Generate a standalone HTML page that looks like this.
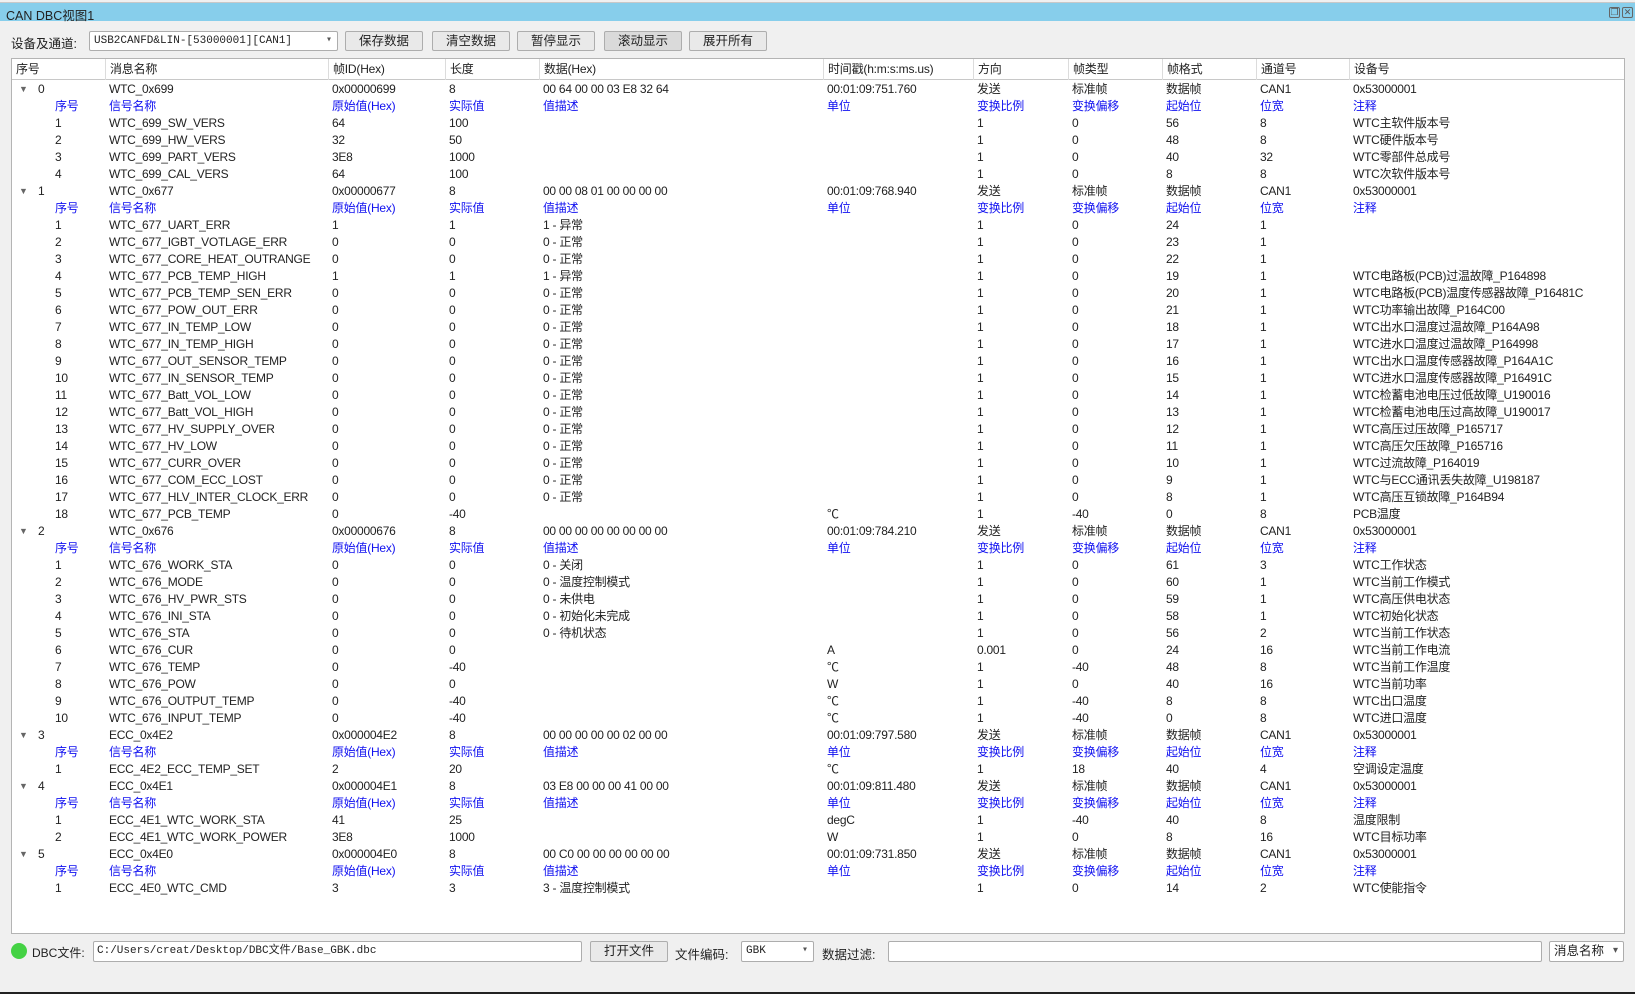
<!DOCTYPE html>
<html><head><meta charset="utf-8"><style>
*{margin:0;padding:0;box-sizing:border-box}
body{width:1635px;height:994px;background:#f0f0f0;position:relative;overflow:hidden;font-family:"Liberation Sans","Noto Sans CJK SC",sans-serif;font-size:12.5px;color:#222}
.tb{position:absolute;left:0;top:2px;width:1635px;height:19px;background:#87ceeb;border-top:1px solid #c8c8c8}
.tb span{position:absolute;left:6px;top:2px;font-size:12.5px}
.ic{position:absolute;top:4px;width:11px;height:11px;border:1px solid #666;border-radius:2px;font-size:9px;line-height:9px;text-align:center;color:#555}
.lbl{position:absolute;font-size:12.5px}
.btn{position:absolute;top:31px;height:20px;border:1px solid #adadad;background:#e9e9e9;border-radius:2px;text-align:center;line-height:18px;font-size:12.5px}
.cmb{position:absolute;border:1px solid #adadad;background:#fff;border-radius:2px;font-family:"Liberation Mono","Noto Sans CJK SC",monospace;font-size:11px;line-height:18px;padding-left:4px}
.cmb:after{content:"▾";position:absolute;right:5px;top:0;font-size:10px;color:#555}
.tbl{position:absolute;left:11px;top:58px;width:1614px;height:876px;background:#fff;border:1px solid #b4b4b4}
.hd{position:absolute;left:0;top:0;width:1612px;height:21px;border-bottom:1px solid #c8c8c8;background:#fff}
.hd i{position:absolute;top:0;height:21px;line-height:21px;font-style:normal;padding-left:4px;border-left:1px solid #dcdcdc;font-size:12px;letter-spacing:-0.2px}
.r{position:absolute;left:0;width:1612px;height:17px;line-height:17px;margin-top:1px;font-size:12px;letter-spacing:-0.25px}
.r i{position:absolute;font-style:normal;white-space:nowrap}
.s{color:#1010f0}
.t{position:absolute;left:7px;font-size:9px;color:#666}
.a{left:26px}.a2{left:43px}.b{left:97px}.c{left:320px}.d{left:437px}.e{left:531px}.f{left:815px}.g{left:965px}.h{left:1060px}.j{left:1154px}.k{left:1248px}.l{left:1341px}
.inp{position:absolute;top:941px;height:21px;background:#fff;border:1px solid #adadad;border-radius:2px}
</style></head><body>
<div class="tb"><span>CAN DBC视图1</span><div class="ic" style="left:1609px">❐</div><div class="ic" style="left:1622px">✕</div></div>
<div class="lbl" style="left:11px;top:33px">设备及通道:</div>
<div class="cmb" style="left:89px;top:31px;width:249px;height:20px">USB2CANFD&amp;LIN-[53000001][CAN1]</div>
<div class="btn" style="left:345px;width:78px">保存数据</div>
<div class="btn" style="left:432px;width:78px">清空数据</div>
<div class="btn" style="left:517px;width:78px">暂停显示</div>
<div class="btn" style="left:604px;width:78px;background:#dadada">滚动显示</div>
<div class="btn" style="left:689px;width:78px">展开所有</div>
<div class="tbl">
<div class="hd"><i style="left:0;border:0">序号</i><i style="left:93px">消息名称</i><i style="left:316px">帧ID(Hex)</i><i style="left:433px">长度</i><i style="left:527px">数据(Hex)</i><i style="left:811px">时间戳(h:m:s:ms.us)</i><i style="left:961px">方向</i><i style="left:1056px">帧类型</i><i style="left:1150px">帧格式</i><i style="left:1244px">通道号</i><i style="left:1337px">设备号</i></div>
<div class="r" style="top:21px"><b class="t">▼</b><i class="a">0</i><i class="b">WTC_0x699</i><i class="c">0x00000699</i><i class="d">8</i><i class="e">00 64 00 00 03 E8 32 64</i><i class="f">00:01:09:751.760</i><i class="g">发送</i><i class="h">标准帧</i><i class="j">数据帧</i><i class="k">CAN1</i><i class="l">0x53000001</i></div>
<div class="r s" style="top:38px"><i class="a2">序号</i><i class="b">信号名称</i><i class="c">原始值(Hex)</i><i class="d">实际值</i><i class="e">值描述</i><i class="f">单位</i><i class="g">变换比例</i><i class="h">变换偏移</i><i class="j">起始位</i><i class="k">位宽</i><i class="l">注释</i></div>
<div class="r" style="top:55px"><i class="a2">1</i><i class="b">WTC_699_SW_VERS</i><i class="c">64</i><i class="d">100</i><i class="g">1</i><i class="h">0</i><i class="j">56</i><i class="k">8</i><i class="l">WTC主软件版本号</i></div>
<div class="r" style="top:72px"><i class="a2">2</i><i class="b">WTC_699_HW_VERS</i><i class="c">32</i><i class="d">50</i><i class="g">1</i><i class="h">0</i><i class="j">48</i><i class="k">8</i><i class="l">WTC硬件版本号</i></div>
<div class="r" style="top:89px"><i class="a2">3</i><i class="b">WTC_699_PART_VERS</i><i class="c">3E8</i><i class="d">1000</i><i class="g">1</i><i class="h">0</i><i class="j">40</i><i class="k">32</i><i class="l">WTC零部件总成号</i></div>
<div class="r" style="top:106px"><i class="a2">4</i><i class="b">WTC_699_CAL_VERS</i><i class="c">64</i><i class="d">100</i><i class="g">1</i><i class="h">0</i><i class="j">8</i><i class="k">8</i><i class="l">WTC次软件版本号</i></div>
<div class="r" style="top:123px"><b class="t">▼</b><i class="a">1</i><i class="b">WTC_0x677</i><i class="c">0x00000677</i><i class="d">8</i><i class="e">00 00 08 01 00 00 00 00</i><i class="f">00:01:09:768.940</i><i class="g">发送</i><i class="h">标准帧</i><i class="j">数据帧</i><i class="k">CAN1</i><i class="l">0x53000001</i></div>
<div class="r s" style="top:140px"><i class="a2">序号</i><i class="b">信号名称</i><i class="c">原始值(Hex)</i><i class="d">实际值</i><i class="e">值描述</i><i class="f">单位</i><i class="g">变换比例</i><i class="h">变换偏移</i><i class="j">起始位</i><i class="k">位宽</i><i class="l">注释</i></div>
<div class="r" style="top:157px"><i class="a2">1</i><i class="b">WTC_677_UART_ERR</i><i class="c">1</i><i class="d">1</i><i class="e">1 - 异常</i><i class="g">1</i><i class="h">0</i><i class="j">24</i><i class="k">1</i></div>
<div class="r" style="top:174px"><i class="a2">2</i><i class="b">WTC_677_IGBT_VOTLAGE_ERR</i><i class="c">0</i><i class="d">0</i><i class="e">0 - 正常</i><i class="g">1</i><i class="h">0</i><i class="j">23</i><i class="k">1</i></div>
<div class="r" style="top:191px"><i class="a2">3</i><i class="b">WTC_677_CORE_HEAT_OUTRANGE</i><i class="c">0</i><i class="d">0</i><i class="e">0 - 正常</i><i class="g">1</i><i class="h">0</i><i class="j">22</i><i class="k">1</i></div>
<div class="r" style="top:208px"><i class="a2">4</i><i class="b">WTC_677_PCB_TEMP_HIGH</i><i class="c">1</i><i class="d">1</i><i class="e">1 - 异常</i><i class="g">1</i><i class="h">0</i><i class="j">19</i><i class="k">1</i><i class="l">WTC电路板(PCB)过温故障_P164898</i></div>
<div class="r" style="top:225px"><i class="a2">5</i><i class="b">WTC_677_PCB_TEMP_SEN_ERR</i><i class="c">0</i><i class="d">0</i><i class="e">0 - 正常</i><i class="g">1</i><i class="h">0</i><i class="j">20</i><i class="k">1</i><i class="l">WTC电路板(PCB)温度传感器故障_P16481C</i></div>
<div class="r" style="top:242px"><i class="a2">6</i><i class="b">WTC_677_POW_OUT_ERR</i><i class="c">0</i><i class="d">0</i><i class="e">0 - 正常</i><i class="g">1</i><i class="h">0</i><i class="j">21</i><i class="k">1</i><i class="l">WTC功率输出故障_P164C00</i></div>
<div class="r" style="top:259px"><i class="a2">7</i><i class="b">WTC_677_IN_TEMP_LOW</i><i class="c">0</i><i class="d">0</i><i class="e">0 - 正常</i><i class="g">1</i><i class="h">0</i><i class="j">18</i><i class="k">1</i><i class="l">WTC出水口温度过温故障_P164A98</i></div>
<div class="r" style="top:276px"><i class="a2">8</i><i class="b">WTC_677_IN_TEMP_HIGH</i><i class="c">0</i><i class="d">0</i><i class="e">0 - 正常</i><i class="g">1</i><i class="h">0</i><i class="j">17</i><i class="k">1</i><i class="l">WTC进水口温度过温故障_P164998</i></div>
<div class="r" style="top:293px"><i class="a2">9</i><i class="b">WTC_677_OUT_SENSOR_TEMP</i><i class="c">0</i><i class="d">0</i><i class="e">0 - 正常</i><i class="g">1</i><i class="h">0</i><i class="j">16</i><i class="k">1</i><i class="l">WTC出水口温度传感器故障_P164A1C</i></div>
<div class="r" style="top:310px"><i class="a2">10</i><i class="b">WTC_677_IN_SENSOR_TEMP</i><i class="c">0</i><i class="d">0</i><i class="e">0 - 正常</i><i class="g">1</i><i class="h">0</i><i class="j">15</i><i class="k">1</i><i class="l">WTC进水口温度传感器故障_P16491C</i></div>
<div class="r" style="top:327px"><i class="a2">11</i><i class="b">WTC_677_Batt_VOL_LOW</i><i class="c">0</i><i class="d">0</i><i class="e">0 - 正常</i><i class="g">1</i><i class="h">0</i><i class="j">14</i><i class="k">1</i><i class="l">WTC检蓄电池电压过低故障_U190016</i></div>
<div class="r" style="top:344px"><i class="a2">12</i><i class="b">WTC_677_Batt_VOL_HIGH</i><i class="c">0</i><i class="d">0</i><i class="e">0 - 正常</i><i class="g">1</i><i class="h">0</i><i class="j">13</i><i class="k">1</i><i class="l">WTC检蓄电池电压过高故障_U190017</i></div>
<div class="r" style="top:361px"><i class="a2">13</i><i class="b">WTC_677_HV_SUPPLY_OVER</i><i class="c">0</i><i class="d">0</i><i class="e">0 - 正常</i><i class="g">1</i><i class="h">0</i><i class="j">12</i><i class="k">1</i><i class="l">WTC高压过压故障_P165717</i></div>
<div class="r" style="top:378px"><i class="a2">14</i><i class="b">WTC_677_HV_LOW</i><i class="c">0</i><i class="d">0</i><i class="e">0 - 正常</i><i class="g">1</i><i class="h">0</i><i class="j">11</i><i class="k">1</i><i class="l">WTC高压欠压故障_P165716</i></div>
<div class="r" style="top:395px"><i class="a2">15</i><i class="b">WTC_677_CURR_OVER</i><i class="c">0</i><i class="d">0</i><i class="e">0 - 正常</i><i class="g">1</i><i class="h">0</i><i class="j">10</i><i class="k">1</i><i class="l">WTC过流故障_P164019</i></div>
<div class="r" style="top:412px"><i class="a2">16</i><i class="b">WTC_677_COM_ECC_LOST</i><i class="c">0</i><i class="d">0</i><i class="e">0 - 正常</i><i class="g">1</i><i class="h">0</i><i class="j">9</i><i class="k">1</i><i class="l">WTC与ECC通讯丢失故障_U198187</i></div>
<div class="r" style="top:429px"><i class="a2">17</i><i class="b">WTC_677_HLV_INTER_CLOCK_ERR</i><i class="c">0</i><i class="d">0</i><i class="e">0 - 正常</i><i class="g">1</i><i class="h">0</i><i class="j">8</i><i class="k">1</i><i class="l">WTC高压互锁故障_P164B94</i></div>
<div class="r" style="top:446px"><i class="a2">18</i><i class="b">WTC_677_PCB_TEMP</i><i class="c">0</i><i class="d">-40</i><i class="f">℃</i><i class="g">1</i><i class="h">-40</i><i class="j">0</i><i class="k">8</i><i class="l">PCB温度</i></div>
<div class="r" style="top:463px"><b class="t">▼</b><i class="a">2</i><i class="b">WTC_0x676</i><i class="c">0x00000676</i><i class="d">8</i><i class="e">00 00 00 00 00 00 00 00</i><i class="f">00:01:09:784.210</i><i class="g">发送</i><i class="h">标准帧</i><i class="j">数据帧</i><i class="k">CAN1</i><i class="l">0x53000001</i></div>
<div class="r s" style="top:480px"><i class="a2">序号</i><i class="b">信号名称</i><i class="c">原始值(Hex)</i><i class="d">实际值</i><i class="e">值描述</i><i class="f">单位</i><i class="g">变换比例</i><i class="h">变换偏移</i><i class="j">起始位</i><i class="k">位宽</i><i class="l">注释</i></div>
<div class="r" style="top:497px"><i class="a2">1</i><i class="b">WTC_676_WORK_STA</i><i class="c">0</i><i class="d">0</i><i class="e">0 - 关闭</i><i class="g">1</i><i class="h">0</i><i class="j">61</i><i class="k">3</i><i class="l">WTC工作状态</i></div>
<div class="r" style="top:514px"><i class="a2">2</i><i class="b">WTC_676_MODE</i><i class="c">0</i><i class="d">0</i><i class="e">0 - 温度控制模式</i><i class="g">1</i><i class="h">0</i><i class="j">60</i><i class="k">1</i><i class="l">WTC当前工作模式</i></div>
<div class="r" style="top:531px"><i class="a2">3</i><i class="b">WTC_676_HV_PWR_STS</i><i class="c">0</i><i class="d">0</i><i class="e">0 - 未供电</i><i class="g">1</i><i class="h">0</i><i class="j">59</i><i class="k">1</i><i class="l">WTC高压供电状态</i></div>
<div class="r" style="top:548px"><i class="a2">4</i><i class="b">WTC_676_INI_STA</i><i class="c">0</i><i class="d">0</i><i class="e">0 - 初始化未完成</i><i class="g">1</i><i class="h">0</i><i class="j">58</i><i class="k">1</i><i class="l">WTC初始化状态</i></div>
<div class="r" style="top:565px"><i class="a2">5</i><i class="b">WTC_676_STA</i><i class="c">0</i><i class="d">0</i><i class="e">0 - 待机状态</i><i class="g">1</i><i class="h">0</i><i class="j">56</i><i class="k">2</i><i class="l">WTC当前工作状态</i></div>
<div class="r" style="top:582px"><i class="a2">6</i><i class="b">WTC_676_CUR</i><i class="c">0</i><i class="d">0</i><i class="f">A</i><i class="g">0.001</i><i class="h">0</i><i class="j">24</i><i class="k">16</i><i class="l">WTC当前工作电流</i></div>
<div class="r" style="top:599px"><i class="a2">7</i><i class="b">WTC_676_TEMP</i><i class="c">0</i><i class="d">-40</i><i class="f">℃</i><i class="g">1</i><i class="h">-40</i><i class="j">48</i><i class="k">8</i><i class="l">WTC当前工作温度</i></div>
<div class="r" style="top:616px"><i class="a2">8</i><i class="b">WTC_676_POW</i><i class="c">0</i><i class="d">0</i><i class="f">W</i><i class="g">1</i><i class="h">0</i><i class="j">40</i><i class="k">16</i><i class="l">WTC当前功率</i></div>
<div class="r" style="top:633px"><i class="a2">9</i><i class="b">WTC_676_OUTPUT_TEMP</i><i class="c">0</i><i class="d">-40</i><i class="f">℃</i><i class="g">1</i><i class="h">-40</i><i class="j">8</i><i class="k">8</i><i class="l">WTC出口温度</i></div>
<div class="r" style="top:650px"><i class="a2">10</i><i class="b">WTC_676_INPUT_TEMP</i><i class="c">0</i><i class="d">-40</i><i class="f">℃</i><i class="g">1</i><i class="h">-40</i><i class="j">0</i><i class="k">8</i><i class="l">WTC进口温度</i></div>
<div class="r" style="top:667px"><b class="t">▼</b><i class="a">3</i><i class="b">ECC_0x4E2</i><i class="c">0x000004E2</i><i class="d">8</i><i class="e">00 00 00 00 00 02 00 00</i><i class="f">00:01:09:797.580</i><i class="g">发送</i><i class="h">标准帧</i><i class="j">数据帧</i><i class="k">CAN1</i><i class="l">0x53000001</i></div>
<div class="r s" style="top:684px"><i class="a2">序号</i><i class="b">信号名称</i><i class="c">原始值(Hex)</i><i class="d">实际值</i><i class="e">值描述</i><i class="f">单位</i><i class="g">变换比例</i><i class="h">变换偏移</i><i class="j">起始位</i><i class="k">位宽</i><i class="l">注释</i></div>
<div class="r" style="top:701px"><i class="a2">1</i><i class="b">ECC_4E2_ECC_TEMP_SET</i><i class="c">2</i><i class="d">20</i><i class="f">℃</i><i class="g">1</i><i class="h">18</i><i class="j">40</i><i class="k">4</i><i class="l">空调设定温度</i></div>
<div class="r" style="top:718px"><b class="t">▼</b><i class="a">4</i><i class="b">ECC_0x4E1</i><i class="c">0x000004E1</i><i class="d">8</i><i class="e">03 E8 00 00 00 41 00 00</i><i class="f">00:01:09:811.480</i><i class="g">发送</i><i class="h">标准帧</i><i class="j">数据帧</i><i class="k">CAN1</i><i class="l">0x53000001</i></div>
<div class="r s" style="top:735px"><i class="a2">序号</i><i class="b">信号名称</i><i class="c">原始值(Hex)</i><i class="d">实际值</i><i class="e">值描述</i><i class="f">单位</i><i class="g">变换比例</i><i class="h">变换偏移</i><i class="j">起始位</i><i class="k">位宽</i><i class="l">注释</i></div>
<div class="r" style="top:752px"><i class="a2">1</i><i class="b">ECC_4E1_WTC_WORK_STA</i><i class="c">41</i><i class="d">25</i><i class="f">degC</i><i class="g">1</i><i class="h">-40</i><i class="j">40</i><i class="k">8</i><i class="l">温度限制</i></div>
<div class="r" style="top:769px"><i class="a2">2</i><i class="b">ECC_4E1_WTC_WORK_POWER</i><i class="c">3E8</i><i class="d">1000</i><i class="f">W</i><i class="g">1</i><i class="h">0</i><i class="j">8</i><i class="k">16</i><i class="l">WTC目标功率</i></div>
<div class="r" style="top:786px"><b class="t">▼</b><i class="a">5</i><i class="b">ECC_0x4E0</i><i class="c">0x000004E0</i><i class="d">8</i><i class="e">00 C0 00 00 00 00 00 00</i><i class="f">00:01:09:731.850</i><i class="g">发送</i><i class="h">标准帧</i><i class="j">数据帧</i><i class="k">CAN1</i><i class="l">0x53000001</i></div>
<div class="r s" style="top:803px"><i class="a2">序号</i><i class="b">信号名称</i><i class="c">原始值(Hex)</i><i class="d">实际值</i><i class="e">值描述</i><i class="f">单位</i><i class="g">变换比例</i><i class="h">变换偏移</i><i class="j">起始位</i><i class="k">位宽</i><i class="l">注释</i></div>
<div class="r" style="top:820px"><i class="a2">1</i><i class="b">ECC_4E0_WTC_CMD</i><i class="c">3</i><i class="d">3</i><i class="e">3 - 温度控制模式</i><i class="g">1</i><i class="h">0</i><i class="j">14</i><i class="k">2</i><i class="l">WTC使能指令</i></div>
</div>
<div style="position:absolute;left:11px;top:943px;width:16px;height:16px;border-radius:50%;background:#44d244"></div>
<div class="lbl" style="left:32px;top:944px;font-size:12px">DBC文件:</div>
<div class="inp" style="left:93px;width:489px;font-family:'Liberation Mono','Noto Sans CJK SC',monospace;font-size:11px;line-height:19px;padding-left:3px">C:/Users/creat/Desktop/DBC文件/Base_GBK.dbc</div>
<div class="btn" style="left:590px;top:941px;width:78px;height:21px;line-height:19px">打开文件</div>
<div class="lbl" style="left:675px;top:944px">文件编码:</div>
<div class="cmb" style="left:741px;top:941px;width:73px;height:21px">GBK</div>
<div class="lbl" style="left:822px;top:944px">数据过滤:</div>
<div class="inp" style="left:888px;width:654px"></div>
<div class="cmb" style="left:1549px;top:941px;width:75px;height:21px;font-family:'Liberation Sans','Noto Sans CJK SC',sans-serif;font-size:12.5px">消息名称</div>
<div style="position:absolute;left:0;top:992px;width:1635px;height:2px;background:#222"></div>
</body></html>
